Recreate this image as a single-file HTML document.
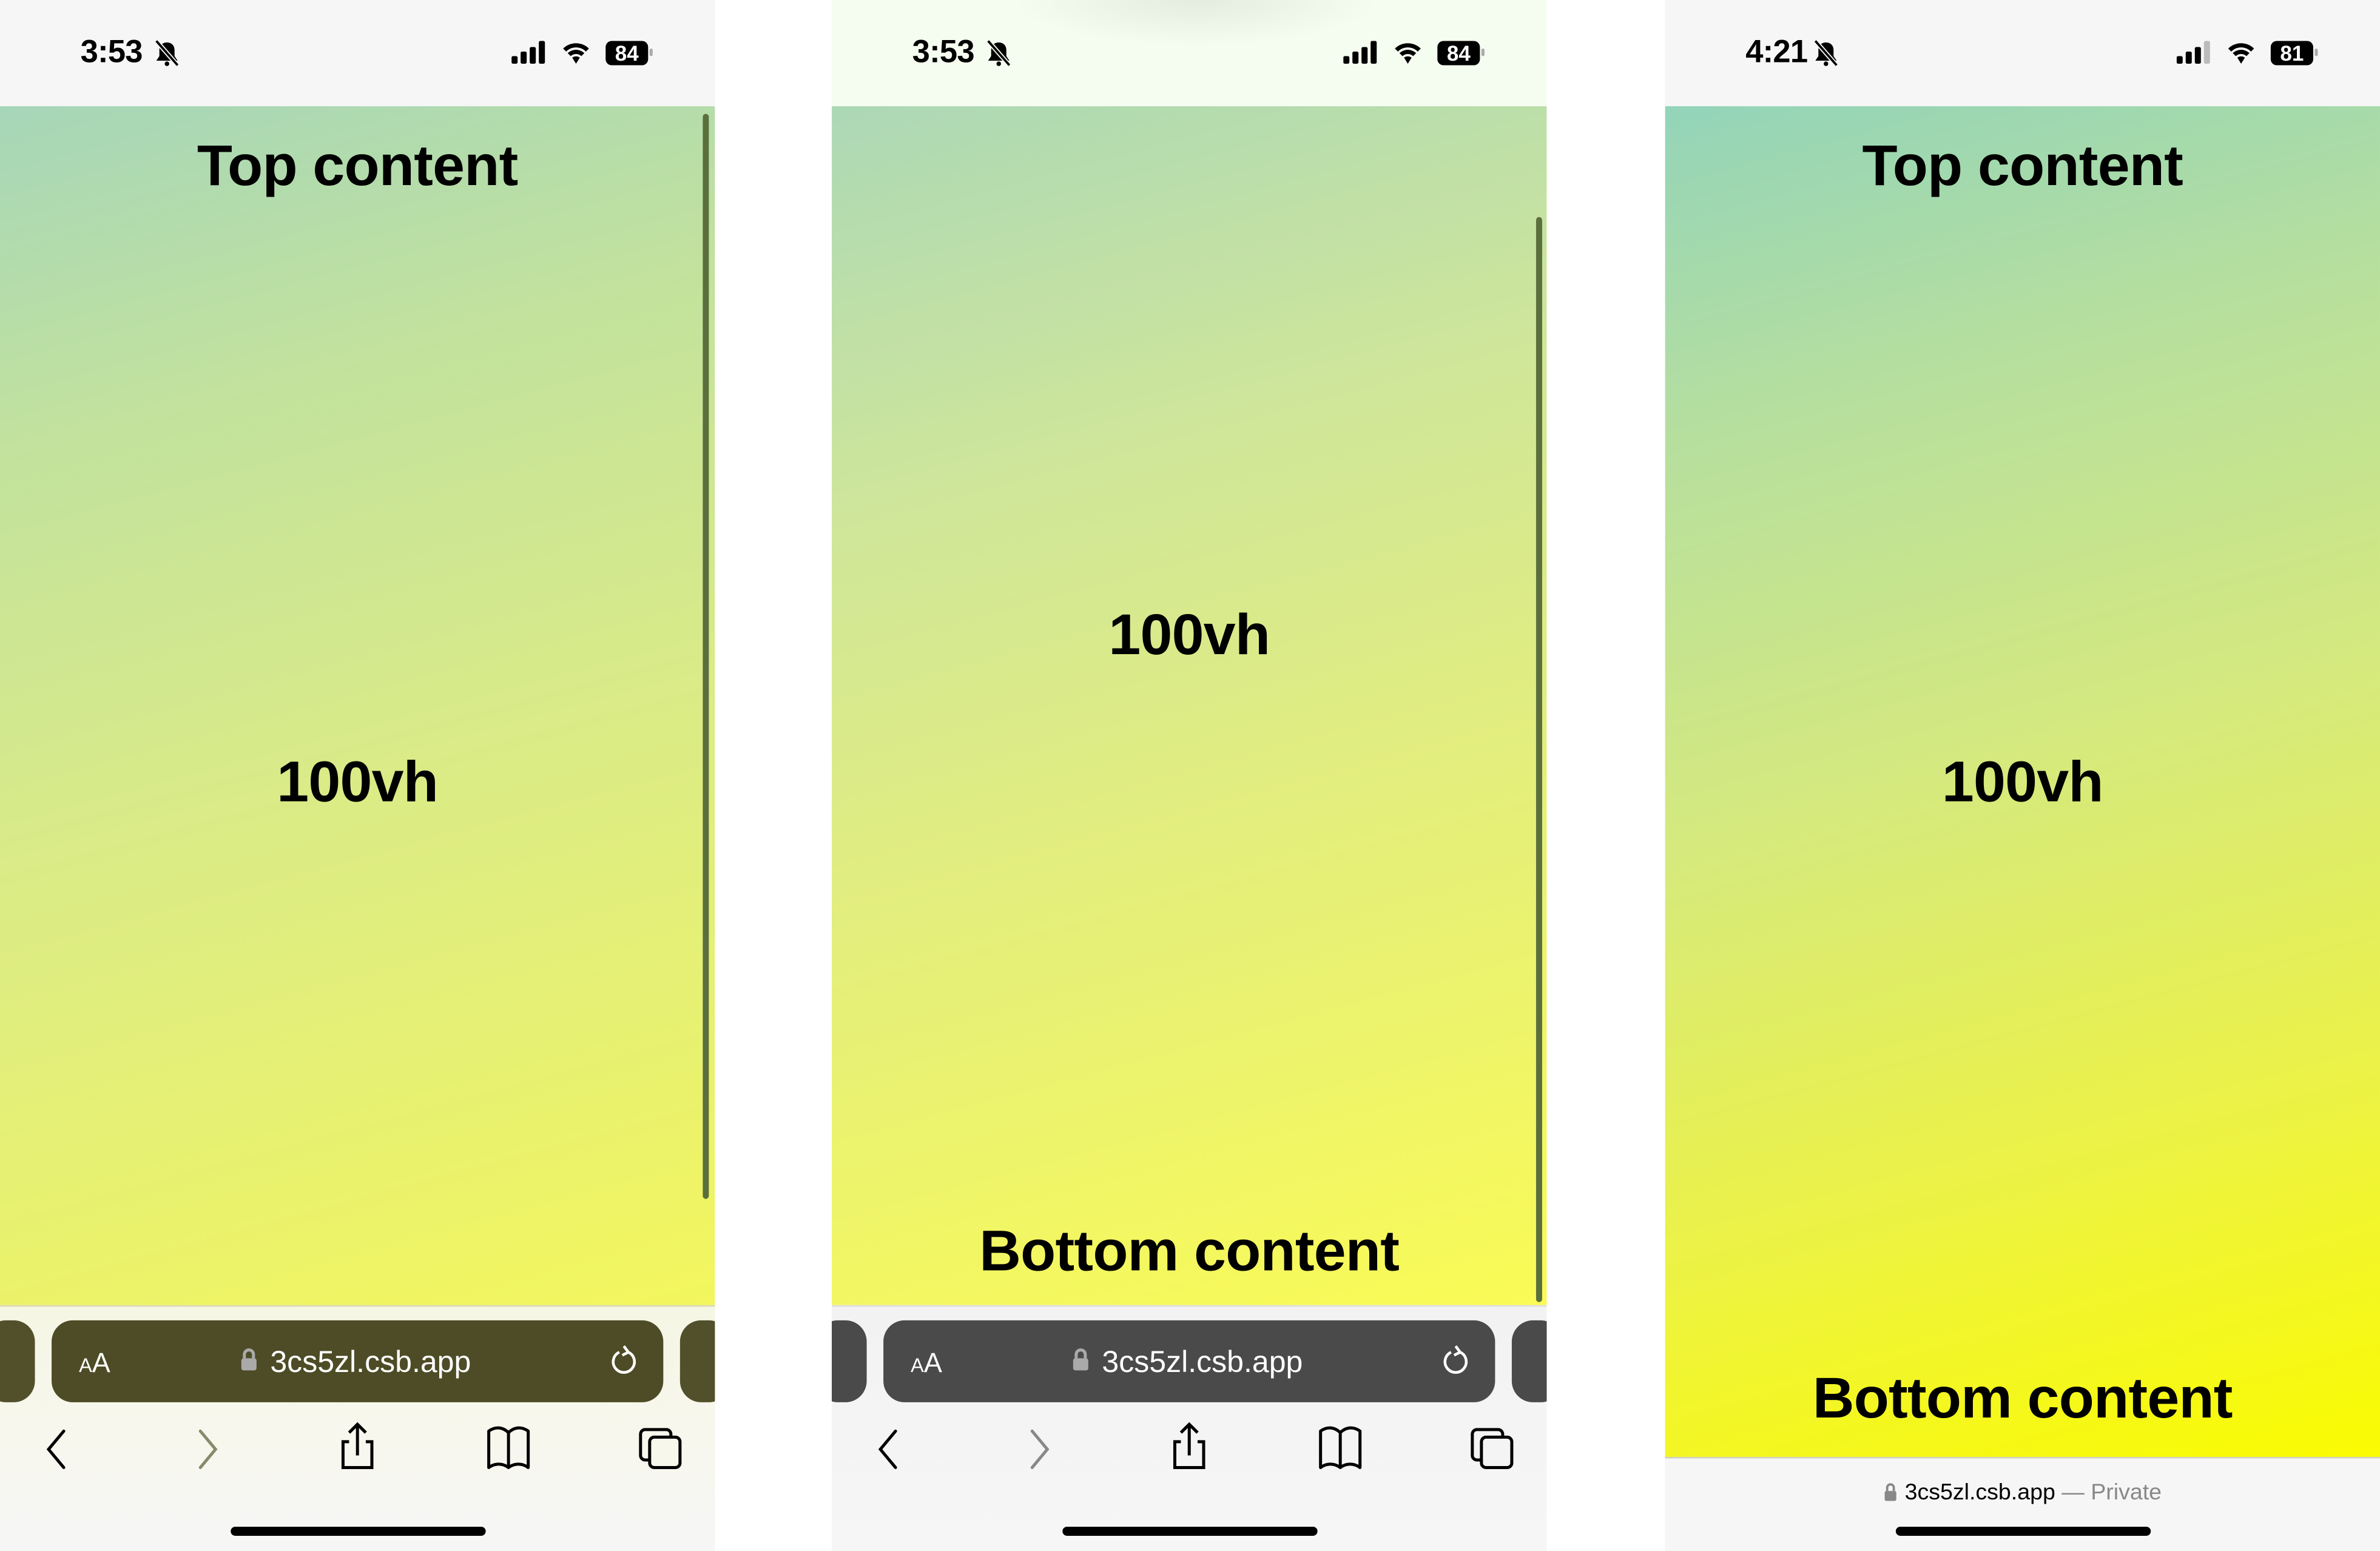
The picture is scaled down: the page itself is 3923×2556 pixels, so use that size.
<!DOCTYPE html>
<html><head><meta charset="utf-8"><style>
html,body{margin:0;padding:0;background:#fff;overflow:hidden}
#w{position:absolute;left:0;top:0;width:1568px;height:1022px;transform:scale(2.50191,2.50098);transform-origin:0 0;font-family:"Liberation Sans",sans-serif}
.p{position:absolute;top:0;width:471px;height:1022px;overflow:hidden;background:#f6f6f6}
.sb{position:absolute;left:0;top:0;width:471px;height:70px}
.time{position:absolute;left:53px;top:23px;font-size:21px;font-weight:bold;letter-spacing:-0.3px}
.g{position:absolute;left:0;top:70px;width:471px}
.t{position:absolute;left:0;width:100%;text-align:center;font-weight:bold;font-size:38px;color:#000;letter-spacing:-0.3px}
.scr{position:absolute;width:4px;background:#5b6f3c;border-radius:2px}
.tb{position:absolute;left:0;top:860px;width:471px;height:162px}
.url{position:absolute;top:10px;left:34px;width:403px;height:54px;border-radius:14px;color:#fff}
.side{position:absolute;top:10px;height:54px;width:24px;border-radius:14px}
.home{position:absolute;left:152px;top:1006px;width:168px;height:6px;border-radius:3px;background:#000}
</style></head><body><div id="w">

<!-- Panel 1 -->
<div class="p" style="left:0">
 <div class="sb">
  <div class="time">3:53</div>
  <svg style="position:absolute;left:101px;top:26px" width="18" height="18" viewBox="0 0 18 18"><path d="M9 2c-3 0-5 2-5 5v4l-2 3h14l-2-3V7c0-3-2-5-5-5z" fill="#000"/><circle cx="9" cy="16" r="1.5" fill="#000"/><path d="M2 1L16 17" stroke="#f6f6f6" stroke-width="3"/><path d="M2 1L16 17" stroke="#000" stroke-width="1.5"/></svg>
  <svg style="position:absolute;left:337px;top:26px" width="100" height="18" viewBox="0 0 100 18"><rect x="0" y="11" width="4" height="5" rx="1"/><rect x="6" y="8" width="4" height="8" rx="1"/><rect x="12" y="5" width="4" height="11" rx="1"/><rect x="18" y="1" width="4" height="15" rx="1"/><path d="M34 6a12 12 0 0 1 17 0l-2 2a9 9 0 0 0-13 0z M37 9a8 8 0 0 1 11 0l-2 2a5 5 0 0 0-7 0z M40 12a4 4 0 0 1 5 0l-2.5 4z"/><rect x="62" y="1" width="28" height="16" rx="4" fill="#000"/><text x="76" y="14" font-size="14" font-weight="bold" fill="#fff" text-anchor="middle" font-family="Liberation Sans">84</text><rect x="91" y="6" width="2" height="5" rx="1" fill="#aaa"/></svg>
 </div>
 <div class="g" style="height:790px;background:linear-gradient(165deg,#a6d6b9 0%,#c2e29d 25%,#daeb87 55%,#f3f65d 100%)">
  <div class="t" style="top:19px">Top content</div>
  <div class="t" style="top:425px">100vh</div>
  <div class="scr" style="left:463px;top:5px;height:715px"></div>
 </div>
 <div class="tb" style="background:linear-gradient(#f6f6e4,#f7f7ef 60%,#f6f6f6)">
  <div style="position:absolute;left:0;top:0;width:471px;height:1px;background:#d8d8b0"></div>
  <div class="side" style="left:-10px;width:33px;background:#52502a"></div>
  <div class="url" style="background:#4d4c26">
   <div style="position:absolute;left:18px;top:18px;font-size:18px"><span style="font-size:13px">A</span>A</div>
   <svg style="position:absolute;left:124px;top:18px" width="12" height="16" viewBox="0 0 12 16"><path d="M3 7V4.5a3 3 0 0 1 6 0V7" stroke="#aaa" stroke-width="2" fill="none"/><rect x="1" y="7" width="10" height="8" rx="1.5" fill="#aaa"/></svg>
   <div style="position:absolute;left:144px;top:17px;font-size:20px">3cs5zl.csb.app</div>
   <svg style="position:absolute;left:367px;top:16px" width="20" height="22" viewBox="0 0 20 22"><path d="M13 5a7 7 0 1 1-6 0" stroke="#fff" stroke-width="1.8" fill="none"/><path d="M10 1l3 4-4 2" stroke="#fff" stroke-width="1.8" fill="none"/></svg>
  </div>
  <div class="side" style="left:448px;width:33px;background:#52502a"></div>
  <svg style="position:absolute;left:0;top:75px" width="471" height="40" viewBox="0 0 471 40">
   <path d="M42 8L32 20l10 12" stroke="#000" stroke-width="2" fill="none" stroke-linecap="round"/>
   <path d="M132 8l10 12-10 12" stroke="#888a6a" stroke-width="2" fill="none" stroke-linecap="round"/>
   <path d="M230 15h-4v17h19V15h-4 M235.5 24V4 M230 9l5.5-5.5 5.5 5.5" stroke="#000" stroke-width="2" fill="none"/>
   <path d="M322 8c4-3 9-3 13 1v23c-4-3-9-3-13 0z M335 9c4-4 9-4 13-1v24c-4-3-9-3-13 0" stroke="#000" stroke-width="2" fill="none" stroke-linejoin="round"/>
   <rect x="422" y="7" width="20" height="20" rx="3" stroke="#000" stroke-width="2" fill="none"/><rect x="428" y="12" width="20" height="20" rx="3" stroke="#000" stroke-width="2" fill="#f7f7ec"/>
  </svg>
 </div>
 <div class="home"></div>
</div>

<!-- Panel 2 -->
<div class="p" style="left:548px;background:#f5fbef">
 <div class="sb" style="background:radial-gradient(ellipse 120px 30px at 240px 0,#e4ece0,#f5fcf0)">
  <div class="time">3:53</div>
  <svg style="position:absolute;left:101px;top:26px" width="18" height="18" viewBox="0 0 18 18"><path d="M9 2c-3 0-5 2-5 5v4l-2 3h14l-2-3V7c0-3-2-5-5-5z" fill="#000"/><circle cx="9" cy="16" r="1.5" fill="#000"/><path d="M2 1L16 17" stroke="#f5fbef" stroke-width="3"/><path d="M2 1L16 17" stroke="#000" stroke-width="1.5"/></svg>
  <svg style="position:absolute;left:337px;top:26px" width="100" height="18" viewBox="0 0 100 18"><rect x="0" y="11" width="4" height="5" rx="1"/><rect x="6" y="8" width="4" height="8" rx="1"/><rect x="12" y="5" width="4" height="11" rx="1"/><rect x="18" y="1" width="4" height="15" rx="1"/><path d="M34 6a12 12 0 0 1 17 0l-2 2a9 9 0 0 0-13 0z M37 9a8 8 0 0 1 11 0l-2 2a5 5 0 0 0-7 0z M40 12a4 4 0 0 1 5 0l-2.5 4z"/><rect x="62" y="1" width="28" height="16" rx="4" fill="#000"/><text x="76" y="14" font-size="14" font-weight="bold" fill="#fff" text-anchor="middle" font-family="Liberation Sans">84</text><rect x="91" y="6" width="2" height="5" rx="1" fill="#aaa"/></svg>
 </div>
 <div class="g" style="height:790px;background:linear-gradient(165deg,#acd8b6 0%,#cfe69a 30%,#e3ee7c 60%,#fafb55 100%)">
  <div class="t" style="top:328px">100vh</div>
  <div class="t" style="top:734px">Bottom content</div>
  <div class="scr" style="left:464px;top:73px;height:715px"></div>
 </div>
 <div class="tb" style="background:linear-gradient(#f2f2f2,#f6f6f6)">
  <div style="position:absolute;left:0;top:0;width:471px;height:1px;background:#ddd"></div>
  <div class="side" style="left:-10px;width:33px;background:#4a4a4a"></div>
  <div class="url" style="background:#4a4a4a">
   <div style="position:absolute;left:18px;top:18px;font-size:18px"><span style="font-size:13px">A</span>A</div>
   <svg style="position:absolute;left:124px;top:18px" width="12" height="16" viewBox="0 0 12 16"><path d="M3 7V4.5a3 3 0 0 1 6 0V7" stroke="#aaa" stroke-width="2" fill="none"/><rect x="1" y="7" width="10" height="8" rx="1.5" fill="#aaa"/></svg>
   <div style="position:absolute;left:144px;top:17px;font-size:20px">3cs5zl.csb.app</div>
   <svg style="position:absolute;left:367px;top:16px" width="20" height="22" viewBox="0 0 20 22"><path d="M13 5a7 7 0 1 1-6 0" stroke="#fff" stroke-width="1.8" fill="none"/><path d="M10 1l3 4-4 2" stroke="#fff" stroke-width="1.8" fill="none"/></svg>
  </div>
  <div class="side" style="left:448px;width:33px;background:#4a4a4a"></div>
  <svg style="position:absolute;left:0;top:75px" width="471" height="40" viewBox="0 0 471 40">
   <path d="M42 8L32 20l10 12" stroke="#000" stroke-width="2" fill="none" stroke-linecap="round"/>
   <path d="M132 8l10 12-10 12" stroke="#888" stroke-width="2" fill="none" stroke-linecap="round"/>
   <path d="M230 15h-4v17h19V15h-4 M235.5 24V4 M230 9l5.5-5.5 5.5 5.5" stroke="#000" stroke-width="2" fill="none"/>
   <path d="M322 8c4-3 9-3 13 1v23c-4-3-9-3-13 0z M335 9c4-4 9-4 13-1v24c-4-3-9-3-13 0" stroke="#000" stroke-width="2" fill="none" stroke-linejoin="round"/>
   <rect x="422" y="7" width="20" height="20" rx="3" stroke="#000" stroke-width="2" fill="none"/><rect x="428" y="12" width="20" height="20" rx="3" stroke="#000" stroke-width="2" fill="#f4f4f4"/>
  </svg>
 </div>
 <div class="home"></div>
</div>

<!-- Panel 3 -->
<div class="p" style="left:1097px">
 <div class="sb">
  <div class="time">4:21</div>
  <svg style="position:absolute;left:97px;top:26px" width="18" height="18" viewBox="0 0 18 18"><path d="M9 2c-3 0-5 2-5 5v4l-2 3h14l-2-3V7c0-3-2-5-5-5z" fill="#000"/><circle cx="9" cy="16" r="1.5" fill="#000"/><path d="M2 1L16 17" stroke="#f6f6f6" stroke-width="3"/><path d="M2 1L16 17" stroke="#000" stroke-width="1.5"/></svg>
  <svg style="position:absolute;left:337px;top:26px" width="100" height="18" viewBox="0 0 100 18"><rect x="0" y="11" width="4" height="5" rx="1"/><rect x="6" y="8" width="4" height="8" rx="1"/><rect x="12" y="5" width="4" height="11" rx="1"/><rect x="18" y="1" width="4" height="15" rx="1" fill="#bbb"/><path d="M34 6a12 12 0 0 1 17 0l-2 2a9 9 0 0 0-13 0z M37 9a8 8 0 0 1 11 0l-2 2a5 5 0 0 0-7 0z M40 12a4 4 0 0 1 5 0l-2.5 4z"/><rect x="62" y="1" width="28" height="16" rx="4" fill="#000"/><text x="76" y="14" font-size="14" font-weight="bold" fill="#fff" text-anchor="middle" font-family="Liberation Sans">81</text><rect x="91" y="6" width="2" height="5" rx="1" fill="#aaa"/></svg>
 </div>
 <div class="g" style="height:890px;background:linear-gradient(165deg,#93d4b9 0%,#b6df9e 22%,#d5e97e 48%,#ecf246 75%,#fafb00 100%)">
  <div class="t" style="top:19px">Top content</div>
  <div class="t" style="top:425px">100vh</div>
  <div class="t" style="top:831px">Bottom content</div>
 </div>
 <div style="position:absolute;left:0;top:960px;width:471px;height:1px;background:#d0d0c0"></div>
 <div style="position:absolute;left:0;top:975px;width:471px;text-align:center;font-size:15px;color:#000">
  <svg width="9" height="12" viewBox="0 0 8 11" style="vertical-align:-1px;margin-right:5px"><path d="M2 5V3a2 2 0 0 1 4 0v2" stroke="#888" stroke-width="1.4" fill="none"/><rect x="0.5" y="5" width="7" height="6" rx="1" fill="#888"/></svg>3cs5zl.csb.app <span style="color:#888">— Private</span>
 </div>
 <div class="home"></div>
</div>

</div></body></html>
